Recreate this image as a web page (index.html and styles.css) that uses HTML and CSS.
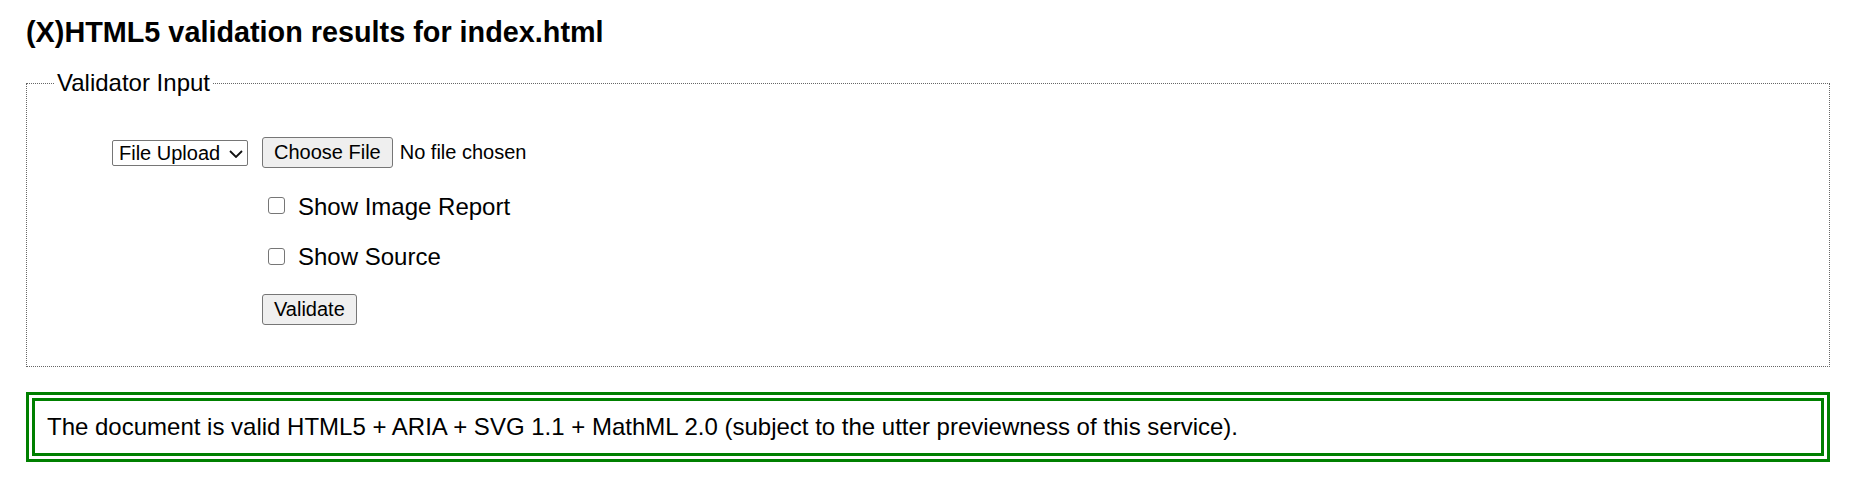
FILE: index.html
```html
<!DOCTYPE html>
<html lang="en">
<head>
<meta charset="utf-8">
<title>Validation results for index.html</title>
<link rel="stylesheet" href="styles.css">
</head>
<body>
<h2 class="title">(X)HTML5 validation results for index.html</h2>
<form class="input-form">
  <fieldset class="validator-input">
    <legend class="legend">Validator Input</legend>
    <div class="form-grid">
      <div class="cell-select">
        <span class="select-wrap">
          <select class="mode-select"><option>File Upload</option></select>
          <svg class="chevron" width="14" height="8" viewBox="0 0 14 8" aria-hidden="true"><path d="M1 1 L7 7 L13 1" fill="none" stroke="#111" stroke-width="1.8"/></svg>
        </span>
      </div>
      <div class="cell-file">
        <button type="button" class="btn">Choose File</button>
        <span class="file-status">No file chosen</span>
      </div>
      <label class="check-row"><input type="checkbox" class="check"><span class="check-label first">Show Image Report</span></label>
      <label class="check-row"><input type="checkbox" class="check"><span class="check-label">Show Source</span></label>
      <div class="cell-submit"><button type="submit" class="btn">Validate</button></div>
    </div>
  </fieldset>
</form>
<p class="success">The document is valid HTML5 + ARIA + SVG 1.1 + MathML 2.0 (subject to the utter previewness of this service).</p>
</body>
</html>
```
FILE: styles.css
```css
html, body {
  background: #fff;
}
body {
  margin: 0;
  padding: 16px 27px 0 26px;
  font-family: "Liberation Sans", Arial, sans-serif;
  color: #000;
}
.title {
  font-size: 28.8px;
  font-weight: bold;
  line-height: normal;
  margin: 0 0 20px;
}
.input-form {
  margin: 0;
}
.validator-input {
  margin: 0;
  padding: 40px 0 41px;
  border: 1px dotted #666;
  min-width: 0;
}
.legend {
  font-size: 24px;
  line-height: normal;
  padding: 0 3px;
  margin-left: 27px;
}
.form-grid {
  display: grid;
  grid-template-columns: 221px 1fr;
  grid-template-rows: 31px 53px 51px 53px;
  column-gap: 14px;
  align-items: end;
}
.cell-select {
  justify-self: end;
  align-self: center;
  display: flex;
  align-items: center;
}
.select-wrap {
  position: relative;
  display: inline-block;
  line-height: 0;
}
.mode-select {
  -webkit-appearance: none;
  appearance: none;
  width: 136px;
  height: 26px;
  margin: 0;
  padding: 0 0 0 6px;
  font-family: "Liberation Sans", Arial, sans-serif;
  font-size: 20px;
  color: #000;
  background: #fff;
  border: 1px solid #767676;
  border-radius: 2px;
}
.chevron {
  position: absolute;
  right: 5px;
  top: 10px;
  pointer-events: none;
}
.cell-file,
.check-row,
.cell-submit {
  grid-column: 2;
  height: 31px;
  display: flex;
  align-items: center;
}
.btn {
  height: 31px;
  margin: 0;
  padding: 0 11px;
  font-family: "Liberation Sans", Arial, sans-serif;
  font-size: 20px;
  color: #000;
  background: #efefef;
  border: 1px solid #767676;
  border-radius: 3px;
}
.file-status {
  font-size: 20px;
  margin-left: 7px;
}
.check-row {
  font-size: 24px;
}
.check {
  -webkit-appearance: none;
  appearance: none;
  width: 17px;
  height: 17px;
  margin: 0 13px 0 6px;
  background: #fff;
  border: 1px solid #767676;
  border-radius: 3px;
}
.check-label.first {
  margin-top: 3px;
}
.success {
  margin: 25px 0 0;
  padding: 12px;
  border: 9px double #008000;
  font-size: 24px;
  line-height: normal;
}
```
